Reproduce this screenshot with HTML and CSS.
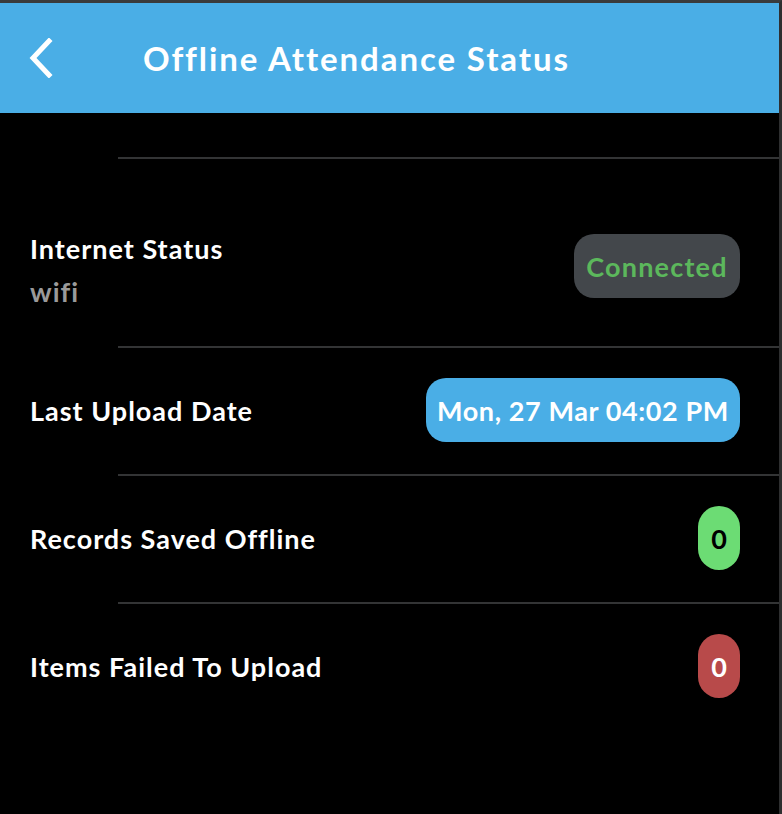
FILE: index.html
```html
<!DOCTYPE html>
<html>
<head>
<meta charset="utf-8">
<link rel="stylesheet" href="styles.css">
</head>
<body>
<div class="screen">
  <header class="appbar">
    <button class="back" aria-label="Back">
      <svg width="30" height="40" viewBox="0 0 30 40"><polyline points="21,3 5,20 21,37" fill="none" stroke="#fff" stroke-width="5" stroke-linecap="square"/></svg>
    </button>
    <h1 class="title">Offline Attendance Status</h1>
  </header>
  <main class="list">
    <div class="sep"></div>
    <div class="row row-first">
      <div class="label-block">
        <div class="label">Internet Status</div>
        <div class="sub">wifi</div>
      </div>
      <span class="badge badge-connected">Connected</span>
    </div>
    <div class="sep"></div>
    <div class="row">
      <div class="label">Last Upload Date</div>
      <span class="badge badge-date">Mon, 27 Mar 04:02 PM</span>
    </div>
    <div class="sep"></div>
    <div class="row">
      <div class="label">Records Saved Offline</div>
      <span class="badge badge-count badge-green">0</span>
    </div>
    <div class="sep"></div>
    <div class="row">
      <div class="label">Items Failed To Upload</div>
      <span class="badge badge-count badge-red">0</span>
    </div>
  </main>
</div>
</body>
</html>
```
FILE: styles.css
```css
html, body {
  margin: 0;
  padding: 0;
  background: #000;
}
body {
  font-family: "Lato", "Noto Sans", sans-serif;
  font-weight: 700;
  color: #fff;
}
.screen {
  width: 779px;
  height: 811px;
  border-top: 3px solid #3a3b3c;
  border-right: 3px solid #2e2f30;
  background: #000;
}
.appbar {
  height: 110px;
  background: #4aaee6;
  display: flex;
  align-items: center;
}
.back {
  margin-left: 28px;
  width: 30px;
  height: 40px;
  padding: 0;
  border: 0;
  background: transparent;
  display: flex;
}
.title {
  margin: 0 0 0 85px;
  font-size: 33px;
  font-weight: 700;
  letter-spacing: 1.9px;
  color: #fff;
}
.list {
  padding-top: 44px;
}
.sep {
  height: 2px;
  margin-left: 118px;
  background: #333435;
}
.row {
  display: flex;
  align-items: center;
  justify-content: space-between;
  padding: 30px 39px 32px 30px;
  height: 64px;
}
.row-first {
  padding-top: 75px;
  padding-bottom: 48px;
}
.label-block {
  display: flex;
  flex-direction: column;
  margin-top: 8px;
}
.label {
  font-size: 27px;
  letter-spacing: 1px;
}
.sub {
  font-size: 27px;
  letter-spacing: 1px;
  color: #9a9a9a;
  margin-top: 10px;
}
.badge {
  height: 64px;
  border-radius: 20px;
  display: inline-flex;
  align-items: center;
  justify-content: center;
  font-size: 27px;
  letter-spacing: 1.2px;
  box-sizing: border-box;
}
.badge-connected {
  background: #43474b;
  color: #5cb85c;
  width: 166px;
}
.badge-date {
  background: #4aaee6;
  color: #fff;
  width: 314px;
  letter-spacing: 0.6px;
}
.badge-count {
  width: 42px;
  border-radius: 21px;
  letter-spacing: 0;
}
.badge-green {
  background: #6cdc74;
  color: #000;
}
.badge-red {
  background: #b84a4a;
  color: #fff;
}
```
